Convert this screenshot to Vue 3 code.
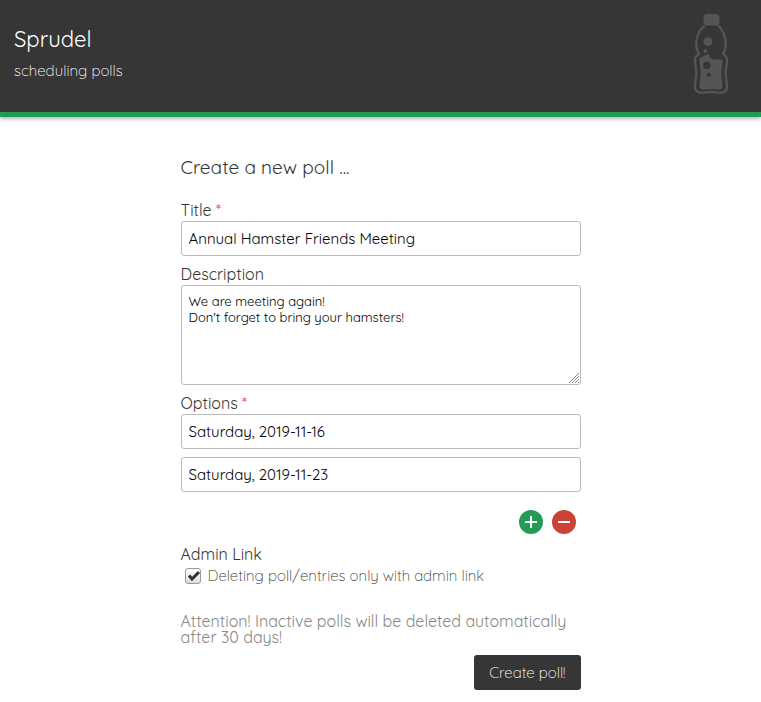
<script setup>
import { ref } from 'vue'

const title = ref('Annual Hamster Friends Meeting')
const description = ref("We are meeting again!\nDon't forget to bring your hamsters!")
const options = ref(['Saturday, 2019-11-16', 'Saturday, 2019-11-23'])
const adminOnly = ref(true)

function addOption() {
  options.value.push('')
}

function removeOption() {
  if (options.value.length > 1) options.value.pop()
}
</script>

<template>
  <header class="site-header">
    <div>
      <h1>Sprudel</h1>
      <p class="tagline">scheduling polls</p>
    </div>
    <svg class="bottle" viewBox="0 0 36 82" width="36" height="82" aria-hidden="true">
      <path class="fill" d="M14 1h9q3.500 0 3.500 3.500v4q0 2.500-2 4h-12q-2-1.500-2-4v-4Q10.500 1 14 1z" />
      <path class="line" d="M12 12.500C6.500 16 3.200 24 3.200 31c0 4 .8 7 2.800 10-2.700 1.500-4 3.500-4 6 0 4.500 1.300 8 1.300 13S2 69 2 74c0 4 3 5.700 6.500 5.700S13.500 79 18 79s6 .7 9.500.7S34 78 34 74c0-5-1.300-9-1.300-14S34 51.500 34 47c0-2.500-1.300-4.500-4-6 2-3 2.800-6 2.800-10 0-7-3.300-15-7.800-18.500" />
      <path class="fill" d="M6.500 45l9-4c.5 1 .5 2 1 3 2 2 4 2.500 7 2.500 2 0 4-.2 6 0C29.500 51 28.300 55 28.300 60s1.200 9 1.200 13c0 3-2 3.700-4.500 3.500-5-.5-9-.5-14 0-2.500.2-4.500-.5-4.500-3.500 0-4 1.200-8 1.200-13S6.500 50 6.500 45z" />
      <circle class="fill" cx="14.800" cy="28.700" r="4.400" />
      <circle class="fill" cx="12.200" cy="38" r="1.900" />
      <circle class="hole" cx="13.800" cy="52.300" r="3.800" />
      <circle class="hole" cx="15.800" cy="61.700" r="2" />
    </svg>
  </header>

  <main>
    <h2>Create a new poll ...</h2>
    <form @submit.prevent>
      <div class="field">
        <label for="title">Title <span class="required">*</span></label>
        <input id="title" v-model="title" type="text" required />
      </div>
      <div class="field">
        <label for="description">Description</label>
        <div class="text-area">
          <textarea id="description" v-model="description"></textarea>
          <svg class="grip" viewBox="0 0 12 12" width="12" height="12" aria-hidden="true">
            <path d="M1 11L11 1M4 11l7-7M7 11l4-4M10 11l1-1" />
          </svg>
        </div>
      </div>
      <fieldset class="options">
        <legend>Options <span class="required">*</span></legend>
        <input
          v-for="(option, i) in options"
          :key="i"
          v-model="options[i]"
          type="text"
          :aria-label="`Option ${i + 1}`"
        />
      </fieldset>
      <div class="option-buttons">
        <button class="round add" type="button" aria-label="Add option" @click="addOption">
          <svg viewBox="0 0 24 24" width="24" height="24"><path d="M6 12h12M12 6v12" /></svg>
        </button>
        <button class="round remove" type="button" aria-label="Remove option" @click="removeOption">
          <svg viewBox="0 0 24 24" width="24" height="24"><path d="M6 12h12" /></svg>
        </button>
      </div>
      <div class="admin">
        <h3>Admin Link</h3>
        <div class="check-row">
          <span class="check">
            <input id="admin" v-model="adminOnly" type="checkbox" />
            <svg v-if="adminOnly" viewBox="0 0 16 16" width="16" height="16" aria-hidden="true">
              <path d="M4 7.500l3 3.500 7-7" />
            </svg>
          </span>
          <label for="admin">Deleting poll/entries only with admin link</label>
        </div>
      </div>
      <p class="notice">Attention! Inactive polls will be deleted automatically after 30 days!</p>
      <div class="submit-row">
        <button class="submit" type="submit">Create poll!</button>
      </div>
    </form>
  </main>
</template>

<style>
body {
  margin: 0;
  background: #fff;
  color: #363636;
  font-family: Quicksand, Lato, "Open Sans", sans-serif;
  font-size: 16px;
  font-weight: 400;
}
</style>

<style scoped>
* {
  box-sizing: border-box;
}
h1, h2, h3, p {
  margin: 0;
  font-weight: 400;
}
.site-header {
  display: flex;
  justify-content: space-between;
  align-items: flex-start;
  min-height: 117px;
  padding: 13px 32px 13px 14px;
  background: #363636;
  color: #fff;
  border-bottom: 5px solid #239b56;
  box-shadow: 0 1px 5px rgba(0, 0, 0, 0.4);
}
h1 {
  padding-top: 12px;
  font-size: 22px;
  line-height: 28px;
}
.tagline {
  padding-top: 8px;
  font-size: 15px;
  font-weight: 300;
  line-height: 20px;
}
.bottle .fill {
  fill: #555;
}
.bottle .hole {
  fill: #363636;
}
.bottle .line {
  fill: none;
  stroke: #555;
  stroke-width: 2.300;
}
main {
  width: 100%;
  max-width: 400px;
  margin: 0 auto;
  padding: 38px 0 12px;
}
h2 {
  margin-bottom: 21px;
  font-size: 19px;
  line-height: 24px;
}
.field {
  display: flex;
  flex-direction: column;
  margin-bottom: 8px;
}
.field label,
legend {
  padding: 0;
  line-height: 21px;
}
.required {
  color: #cb4335;
}
input[type="text"],
textarea {
  display: block;
  width: 100%;
  margin: 0;
  padding: 7px;
  border: 1px solid #bbb;
  border-radius: 3px;
  background: #fff;
  color: #000;
  font-family: inherit;
  font-weight: 400;
}
input[type="text"] {
  height: 35px;
  font-size: 15px;
}
textarea {
  height: 100px;
  font-size: 13px;
  line-height: 16px;
  resize: none;
}
.text-area {
  position: relative;
}
.grip {
  position: absolute;
  right: 1px;
  bottom: 1px;
  fill: none;
  stroke: #888;
  pointer-events: none;
}
.options {
  min-width: 0;
  margin: 0;
  padding: 0;
  border: 0;
}
.options input + input {
  margin-top: 8px;
}
.option-buttons {
  display: flex;
  justify-content: flex-end;
  gap: 9px;
  padding: 18px 5px 10px;
}
.round {
  width: 24px;
  height: 24px;
  padding: 0;
  border: 0;
  border-radius: 50%;
}
.round svg {
  display: block;
  fill: none;
  stroke: #fff;
  stroke-width: 2;
}
.add {
  background: #239b56;
}
.remove {
  background: #cb4335;
}
h3 {
  font-size: 16px;
  line-height: 21px;
}
.check-row {
  display: flex;
  align-items: center;
  gap: 7px;
  height: 22px;
  padding-left: 4px;
  font-size: 15px;
  font-weight: 300;
  line-height: 20px;
}
.check {
  display: grid;
  width: 16px;
  height: 16px;
}
.check input,
.check svg {
  grid-area: 1 / 1;
}
.check input {
  appearance: none;
  width: 16px;
  height: 16px;
  margin: 0;
  border: 1px solid #999;
  border-radius: 3px;
  background: linear-gradient(#fff, #ddd);
}
.check svg {
  pointer-events: none;
  fill: none;
  stroke: #2e3436;
  stroke-width: 3;
}
.notice {
  margin: 26px 0 10px;
  color: #888;
  line-height: 16px;
}
.submit-row {
  display: flex;
  justify-content: flex-end;
}
.submit {
  height: 35px;
  padding: 0 15px;
  border: 0;
  border-radius: 3px;
  background: #363636;
  color: #fff;
  font-family: inherit;
  font-size: 15px;
  font-weight: 300;
}
</style>
